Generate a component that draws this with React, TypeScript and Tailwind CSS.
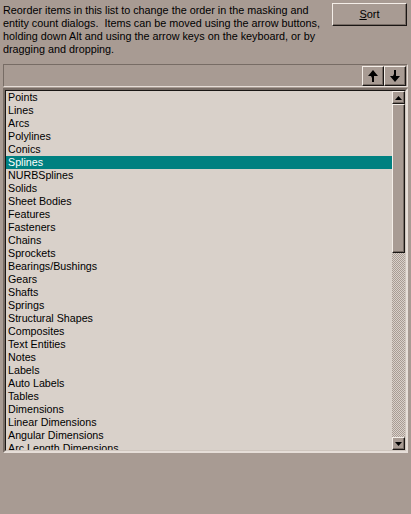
import React from 'react';

const items = [
  'Points', 'Lines', 'Arcs', 'Polylines', 'Conics', 'Splines', 'NURBSplines', 'Solids',
  'Sheet Bodies', 'Features', 'Fasteners', 'Chains', 'Sprockets', 'Bearings/Bushings',
  'Gears', 'Shafts', 'Springs', 'Structural Shapes', 'Composites', 'Text Entities', 'Notes',
  'Labels', 'Auto Labels', 'Tables', 'Dimensions', 'Linear Dimensions', 'Angular Dimensions',
  'Arc Length Dimensions',
];

const raised =
  'border border-t-[#f4eee8] border-l-[#f4eee8] border-r-[#1a1614] border-b-[#1a1614] shadow-[inset_-1px_-1px_0_#776c65]';

const ArrowUp = () => (
  <svg width="10" height="12" viewBox="0 0 10 12">
    <path d="M5 0 L10 6 L6 6 L6 12 L4 12 L4 8 L3 6 L0 6 Z" fill="#000" />
  </svg>
);

const ArrowDown = () => (
  <svg width="10" height="12" viewBox="0 0 10 12">
    <path d="M5 12 L10 6 L6 6 L6 0 L4 0 L4 4 L3 6 L0 6 Z" fill="#000" />
  </svg>
);

export default function App() {
  return (
    <div
      className="w-[411px] h-[514px] bg-[#a89b93] text-black text-[11px] leading-[13px] overflow-hidden"
      style={{ fontFamily: '"Liberation Sans", Arial, sans-serif' }}
    >
      <div className="flex items-start pt-[3px] pl-[3px] pr-[4px]">
        <p className="w-[326px] pt-[1px] text-[10.8px] whitespace-nowrap">
          Reorder items in this list to change the order in the masking and<br />
          entity count dialogs.&nbsp; Items can be moved using the arrow buttons,<br />
          holding down Alt and using the arrow keys on the keyboard, or by<br />
          dragging and dropping.
        </p>
        <button className={`ml-auto w-[75px] h-[23px] bg-[#a89b93] ${raised} flex items-center justify-center text-[11px]`}>
          <span><span className="underline">S</span>ort</span>
        </button>
      </div>

      <div className="mx-[3px] mt-[8px] h-[23px] border border-t-[#776c65] border-l-[#776c65] border-b-[#e6ded8] border-r-[#e6ded8] flex justify-end items-center pr-[1px]">
        <button className={`w-[22px] h-[20px] bg-[#a89b93] ${raised} flex items-center justify-center`}>
          <ArrowUp />
        </button>
        <button className={`w-[22px] h-[20px] bg-[#a89b93] ${raised} flex items-center justify-center`}>
          <ArrowDown />
        </button>
      </div>

      <div className="mx-[3px] mt-[1px] h-[365px] border-2 border-t-[#776c65] border-l-[#776c65] border-b-[#e6ded8] border-r-[#e6ded8] flex">
        <div className="flex-1 flex border border-t-[#1a1614] border-l-[#1a1614] border-b-[#cfc6be] border-r-[#cfc6be] bg-[#d9d1ca]">
          <div className="flex-1 overflow-hidden text-[10.7px]">
            {items.map((it) => (
              <div
                key={it}
                className={`h-[13px] pl-[2px] whitespace-nowrap ${
                  it === 'Splines' ? 'bg-[#008080] text-white' : ''
                }`}
              >
                {it}
              </div>
            ))}
          </div>
          <div className="w-[13px] flex flex-col">
            <div className={`h-[13px] bg-[#a89b93] ${raised} flex items-center justify-center`}>
              <svg width="7" height="4" viewBox="0 0 7 4"><path d="M3.5 0 L7 4 L0 4 Z" fill="#000" /></svg>
            </div>
            <div className={`h-[149px] bg-[#a89b93] ${raised}`} />
            <div className="flex-1 bg-[repeating-conic-gradient(#a89b93_0_25%,#d9d1ca_0_50%)] bg-[length:2px_2px]" />
            <div className={`h-[13px] bg-[#a89b93] ${raised} flex items-center justify-center`}>
              <svg width="7" height="4" viewBox="0 0 7 4"><path d="M0 0 L7 0 L3.5 4 Z" fill="#000" /></svg>
            </div>
          </div>
        </div>
      </div>
    </div>
  );
}
